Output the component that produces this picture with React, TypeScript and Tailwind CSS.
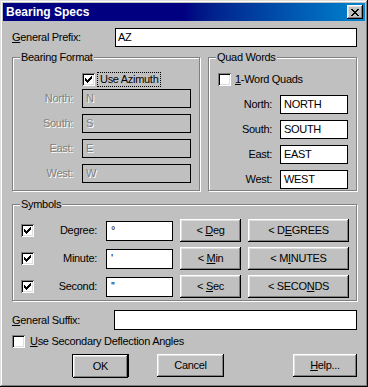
import type { ReactNode } from 'react';

const font = "font-['Liberation_Sans',Arial,sans-serif]";

const btnShadow =
  'shadow-[inset_-1px_-1px_0_#000,inset_1px_1px_0_#fff,inset_-2px_-2px_0_#808080,inset_2px_2px_0_#dfdfdf]';

const etched = 'border border-[#808080] shadow-[1px_1px_0_#fff,inset_1px_1px_0_#fff]';

const disabledText = 'text-[#808080] [text-shadow:1px_1px_0_#fff]';

const Check = () => (
  <svg width="7" height="7" viewBox="0 0 7 7" shapeRendering="crispEdges">
    <path d="M0 2h1v1h1v1h1v-1h1v-1h1v-1h1v-1h1v3h-1v1h-1v1h-1v1h-1v1h-1v-1h-1v-1h-1z" fill="#000" />
  </svg>
);

const Checkbox = ({ checked }: { checked?: boolean }) => (
  <div className="w-[13px] h-[13px] shrink-0 bg-white flex items-center justify-center shadow-[inset_1px_1px_0_#808080,inset_-1px_-1px_0_#fff,inset_2px_2px_0_#000,inset_-2px_-2px_0_#dfdfdf]">
    {checked && <Check />}
  </div>
);

const Field = ({ value, w, disabled }: { value: string; w: string; disabled?: boolean }) => (
  <div
    className={`${w} h-[19px] shrink-0 border border-black flex items-center pl-[3px] ${
      disabled ? `bg-[#c0c0c0] ${disabledText}` : 'bg-white text-black'
    }`}
  >
    {value}
  </div>
);

const Button = ({ children, className = '' }: { children: ReactNode; className?: string }) => (
  <div className={`h-[23px] shrink-0 flex items-center justify-center text-black ${btnShadow} ${className}`}>
    {children}
  </div>
);

const Group = ({ title, className, children }: { title: string; className: string; children: ReactNode }) => (
  <div className={`relative ${etched} ${className}`}>
    <span className="absolute -top-[8px] left-[7px] bg-[#c0c0c0] px-[1px] leading-[14px]">{title}</span>
    {children}
  </div>
);

const bearing = [
  ['North:', 'N'],
  ['South:', 'S'],
  ['East:', 'E'],
  ['West:', 'W'],
];

const quads = [
  ['North:', 'NORTH'],
  ['South:', 'SOUTH'],
  ['East:', 'EAST'],
  ['West:', 'WEST'],
];

const symbols = [
  { label: 'Degree:', value: '°', short: <>&lt;&nbsp;<u>D</u>eg</>, long: <>&lt;&nbsp;D<u>E</u>GREES</> },
  { label: 'Minute:', value: "'", short: <>&lt;&nbsp;<u>M</u>in</>, long: <>&lt;&nbsp;M<u>I</u>NUTES</> },
  { label: 'Second:', value: "''", short: <>&lt;&nbsp;<u>S</u>ec</>, long: <>&lt;&nbsp;SECO<u>N</u>DS</> },
];

export default function App() {
  return (
    <div
      className={`${font} text-[11px] tracking-[-0.3px] text-black w-[368px] h-[387px] bg-[#c0c0c0] p-[3px] flex flex-col shadow-[inset_-1px_-1px_0_#000,inset_1px_1px_0_#dfdfdf,inset_-2px_-2px_0_#808080,inset_2px_2px_0_#fff]`}
    >
      {/* Title bar */}
      <div className="h-[18px] shrink-0 flex items-center justify-between bg-gradient-to-r from-[#000080] via-[#000080] to-[#1084d0] pl-[3px] pr-[2px]">
        <span className="text-white font-bold text-[12px] tracking-normal">Bearing Specs</span>
        <div className={`w-[16px] h-[14px] bg-[#c0c0c0] flex items-center justify-center ${btnShadow}`}>
          <svg width="8" height="7" viewBox="0 0 8 7" shapeRendering="crispEdges">
            <path d="M0 0h2v1h1v1h2v-1h1v-1h2v1h-1v1h-1v1h-1v1h1v1h1v1h1v1h-2v-1h-1v-1h-2v1h-1v1h-2v-1h1v-1h1v-1h1v-1h-1v-1h-1v-1h-1z" fill="#000" />
          </svg>
        </div>
      </div>

      <div className="flex flex-col pl-[9px] pr-[8px]">
        {/* General Prefix */}
        <div className="flex items-center mt-[7px] h-[19px]">
          <span className="w-[103px] shrink-0">
            <u>G</u>eneral Prefix:
          </span>
          <div className="flex-1 h-[19px] bg-white border border-black flex items-center pl-[2px]">AZ</div>
        </div>

        {/* Bearing Format + Quad Words */}
        <div className="flex mt-[10px]">
          <Group title="Bearing Format" className="w-[188px] h-[134px]">
            <div className="grid grid-cols-[60px_109px] gap-x-[9px] gap-y-[6px] pt-[15px] items-center">
              <div />
              <div className="flex items-center h-[13px] -mb-[3px]">
                <Checkbox checked />
                <span className="ml-[3px] px-[2px] leading-[13px] outline outline-1 outline-dotted outline-black">
                  Use Azimuth
                </span>
              </div>
              {bearing.map(([label, value]) => (
                <div key={label} className="contents">
                  <span className={`text-right ${disabledText}`}>{label}</span>
                  <Field value={value} w="w-[109px]" disabled />
                </div>
              ))}
            </div>
          </Group>

          <Group title="Quad Words" className="ml-[8px] w-[149px] h-[134px]">
            <div className="pt-[15px] pl-[9px] flex items-center h-[28px]">
              <Checkbox />
              <span className="ml-[4px] leading-[13px]">
                <u>1</u>-Word Quads
              </span>
            </div>
            <div className="grid grid-cols-[63px_68px] gap-x-[8px] gap-y-[6px] mt-[9px] items-center">
              {quads.map(([label, value]) => (
                <div key={label} className="contents">
                  <span className="text-right">{label}</span>
                  <Field value={value} w="w-[68px]" />
                </div>
              ))}
            </div>
          </Group>
        </div>

        {/* Symbols */}
        <Group title="Symbols" className="mt-[13px] w-[345px] h-[97px]">
          <div className="flex flex-col gap-[5px] pt-[14px]">
            {symbols.map((s) => (
              <div key={s.label} className="flex items-center h-[23px]">
                <div className="ml-[8px]">
                  <Checkbox checked />
                </div>
                <span className="w-[63px] text-right">{s.label}</span>
                <div className="ml-[9px] w-[67px] h-[20px] bg-white border border-black pl-[4px] flex items-center">
                  {s.value}
                </div>
                <Button className="ml-[7px] w-[61px]">{s.short}</Button>
                <Button className="ml-[7px] w-[101px]">{s.long}</Button>
              </div>
            ))}
          </div>
        </Group>

        {/* General Suffix */}
        <div className="flex items-center mt-[9px] h-[20px]">
          <span className="w-[102px] shrink-0">
            <u>G</u>eneral Suffix:
          </span>
          <div className="flex-1 h-[20px] bg-white border border-black" />
        </div>

        <div className="flex items-center mt-[5px] h-[13px]">
          <Checkbox />
          <span className="ml-[5px]">
            <u>U</u>se Secondary Deflection Angles
          </span>
        </div>

        {/* Buttons */}
        <div className="flex mt-[6px]">
          <div className="ml-[60px] w-[57px] h-[23px] border border-black">
            <Button className="w-full h-[21px]">OK</Button>
          </div>
          <Button className="ml-[28px] w-[67px]">Cancel</Button>
          <Button className="ml-[69px] w-[64px]">
            <u>H</u>elp...
          </Button>
        </div>
      </div>
    </div>
  );
}
